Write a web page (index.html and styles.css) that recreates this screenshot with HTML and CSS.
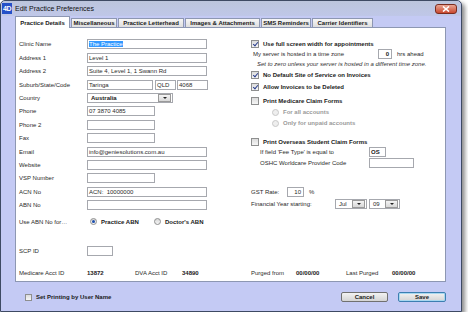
FILE: index.html
```html
<!DOCTYPE html>
<html lang="en">

<head>
    <meta charset="UTF-8">
    <title>Edit Practice Preferences</title>
    <link rel="stylesheet" href="styles.css">
</head>

<body>
    <div class="window">
        <!-- 标题栏 -->
        <div class="titlebar">
            <span class="app-icon">4D</span>
            <span class="title">Edit Practice Preferences</span>
            <span class="close-btn">
                <svg width="8" height="6" viewBox="0 0 8 6"><path d="M1 0.5 L7 5.5 M7 0.5 L1 5.5" stroke="#fff" stroke-width="1.6"/></svg>
            </span>
        </div>

        <div class="dialog">
            <!-- 选项卡 -->
            <div class="tabs">
                <div class="tab active" style="width:55px">Practice Details</div>
                <div class="tab" style="width:46px">Miscellaneous</div>
                <div class="tab" style="width:66px">Practice Letterhead</div>
                <div class="tab" style="width:75px">Images &amp; Attachments</div>
                <div class="tab" style="width:50px">SMS Reminders</div>
                <div class="tab" style="width:61px">Carrier Identifiers</div>
            </div>

            <div class="panel">
                <!-- 左侧：诊所信息 -->
                <div class="col-left">
                    <div class="field"><span class="label">Clinic Name</span><span class="input w-long"><span class="selected-text">The Practice</span></span></div>
                    <div class="field"><span class="label">Address 1</span><span class="input w-long">Level 1</span></div>
                    <div class="field"><span class="label">Address 2</span><span class="input w-long">Suite 4, Level 1, 1 Swann Rd</span></div>
                    <div class="field"><span class="label">Suburb/State/Code</span><span class="input w-suburb">Taringa</span><span class="input w-state">QLD</span><span class="input w-code">4068</span></div>
                    <div class="field"><span class="label">Country</span><span class="select w-country"><b>Australia</b><span class="drop"></span></span></div>
                    <div class="field"><span class="label">Phone</span><span class="input w-mid">07 3870 4085</span></div>
                    <div class="field"><span class="label">Phone 2</span><span class="input w-mid"></span></div>
                    <div class="field"><span class="label">Fax</span><span class="input w-mid"></span></div>
                    <div class="field"><span class="label">Email</span><span class="input w-long">info@geniesolutions.com.au</span></div>
                    <div class="field"><span class="label">Website</span><span class="input w-long"></span></div>
                    <div class="field"><span class="label">VSP Number</span><span class="input w-mid"></span></div>
                    <div class="field"><span class="label">ACN No</span><span class="input w-long">ACN:&nbsp; 10000000</span></div>
                    <div class="field"><span class="label">ABN No</span><span class="input w-long"></span></div>
                    <div class="field abn-row">
                        <span class="label">Use ABN No for…</span>
                        <span class="radio checked"></span><b class="radio-text">Practice ABN</b>
                        <span class="radio doctor"></span><b class="radio-text">Doctor's ABN</b>
                    </div>
                    <div class="field scp-row"><span class="label">SCP ID</span><span class="input w-scp"></span></div>
                    <div class="field acct-row">
                        <span class="label">Medicare Acct ID</span><b class="value w-48">13872</b>
                        <span class="label w-47">DVA Acct ID</span><b class="value">34890</b>
                    </div>
                </div>

                <!-- 右侧：选项 -->
                <div class="col-right">
                    <div class="row r1"><span class="check checked"></span><b>Use full screen width for appointments</b></div>
                    <div class="row r2 indent-2"><span class="server-label">My server is hosted in a time zone</span><span class="input w-hrs num"><b>0</b></span><span class="after">hrs ahead</span></div>
                    <div class="row r3 indent-6 hint">Set to zero unless your server is hosted in a different time zone.</div>
                    <div class="row r4"><span class="check checked"></span><b>No Default Site of Service on Invoices</b></div>
                    <div class="row r5"><span class="check checked"></span><b>Allow Invoices to be Deleted</b></div>
                    <div class="row r6"><span class="check"></span><b>Print Medicare Claim Forms</b></div>
                    <div class="row r7 indent-21 disabled"><span class="radio off"></span><b>For all accounts</b></div>
                    <div class="row r8 indent-21 disabled"><span class="radio off"></span><b>Only for unpaid accounts</b></div>
                    <div class="row r9"><span class="check"></span><b>Print Overseas Student Claim Forms</b></div>
                    <div class="row r10 indent-9"><span class="fee-label">If field 'Fee Type' is equal to</span><span class="input w-os"><b>OS</b></span></div>
                    <div class="row r11 indent-9"><span class="fee-label">OSHC Worldcare Provider Code</span><span class="input w-oshc"></span></div>
                    <div class="row r12"><span class="gst-label">GST Rate:</span><span class="input w-gst num">10</span><span class="after">%</span></div>
                    <div class="row r13"><span class="year-label">Financial Year starting:</span><span class="select w-jul">Jul<span class="drop"></span></span><span class="select w-yr">09<span class="drop"></span></span></div>
                    <div class="row purged">
                        <span class="purged-label">Purged from</span><b class="purged-value">00/00/00</b>
                        <span class="purged-label2">Last Purged</span><b>00/00/00</b>
                    </div>
                </div>
            </div>

            <!-- 底部按钮 -->
            <div class="footer">
                <span class="check"></span><b>Set Printing by User Name</b>
                <button class="btn cancel">Cancel</button>
                <button class="btn save">Save</button>
            </div>
        </div>
    </div>
</body>

</html>
```

FILE: styles.css
```css
/* 页面基础 */
body {
    margin: 0;
    background-color: #fff;
    font-family: "Liberation Sans", Arial, sans-serif;
    font-size: 6px;
    color: #2a2a2a;
}

b {
    font-weight: bold;
    color: #1a1a1a;
}

/* 窗口外框 */
.window {
    width: 460px;
    height: 310px;
    border: 1px solid #3e4a63;
    border-radius: 5px 5px 0 0;
    background-color: #c4caf4;
    box-shadow: 3px 3px 4px rgba(0, 0, 0, 0.45);
    display: flex;
    flex-direction: column;
}

/* 标题栏 */
.titlebar {
    height: 15px;
    display: flex;
    align-items: center;
    padding-left: 1px;
    border-radius: 5px 5px 0 0;
    background: linear-gradient(#bcc5dc, #bfc7e8);
}

.app-icon {
    width: 10px;
    height: 11px;
    background-color: #2450c8;
    color: #fff;
    font-size: 7px;
    font-weight: bold;
    display: flex;
    align-items: center;
    justify-content: center;
    margin-right: 3px;
    letter-spacing: -0.5px;
}

.title {
    font-size: 7px;
    color: #111;
}

.close-btn {
    margin-left: auto;
    margin-right: 4px;
    width: 20px;
    height: 8px;
    border: 1px solid #7b2c1f;
    border-radius: 3px;
    background: linear-gradient(#e9a594, #c9482f);
    display: flex;
    align-items: center;
    justify-content: center;
}

/* 对话框主体 */
.dialog {
    flex: 1;
    display: flex;
    flex-direction: column;
    padding: 0 15px 0 14px;
}

/* 选项卡 */
.tabs {
    height: 11px;
    display: flex;
    align-items: flex-end;
    position: relative;
    z-index: 1;
}

.tab {
    height: 9px;
    box-sizing: border-box;
    border: 1px solid #8d97b2;
    border-bottom: none;
    background: linear-gradient(#f6f6f6, #dedede);
    font-weight: bold;
    color: #1a1a1a;
    display: flex;
    align-items: center;
    justify-content: center;
    white-space: nowrap;
    margin-right: 1px;
}

.tab.active {
    height: 12px;
    margin-bottom: -1px;
    background: #fff;
}

/* 白色面板 */
.panel {
    height: 255px;
    box-sizing: border-box;
    border: 1px solid #8d97b2;
    background-color: #fff;
    display: flex;
}

.col-left {
    width: 229px;
    padding: 9.8px 0 0 3px;
    box-sizing: border-box;
}

.field {
    height: 13.4px;
    display: flex;
    align-items: center;
}

.label {
    width: 68px;
    flex-shrink: 0;
}

.abn-row {
    margin-top: 3px;
}

.scp-row {
    margin-top: 15.7px;
}

.acct-row {
    margin-top: 8.6px;
}

.value.w-48 {
    width: 48px;
}

.label.w-47 {
    width: 47px;
}

/* 输入框 */
.input {
    height: 10px;
    box-sizing: border-box;
    border: 1px solid #a6a8ae;
    background-color: #fff;
    display: flex;
    align-items: center;
    padding-left: 1px;
    white-space: nowrap;
    overflow: hidden;
    flex-shrink: 0;
}

.selected-text {
    background-color: #3399ff;
    color: #fff;
}

.w-long { width: 120px; }
.w-mid { width: 68px; }
.w-suburb { width: 66px; }
.w-state { width: 21px; margin-left: 2px; }
.w-code { width: 31px; margin-left: 1px; }
.w-scp { width: 26px; }
.w-hrs { width: 14px; }
.w-os { width: 17px; }
.w-oshc { width: 45px; }
.w-gst { width: 17px; }

.num {
    justify-content: flex-end;
    padding-right: 2px;
}

/* 下拉框 */
.select {
    height: 10px;
    box-sizing: border-box;
    border: 1px solid #a6a8ae;
    background-color: #fff;
    display: flex;
    align-items: center;
    padding-left: 3px;
    flex-shrink: 0;
}

.select .drop {
    margin-left: auto;
    margin-right: 1px;
    width: 11px;
    height: 6px;
    border: 1px solid #9a9a9a;
    background: linear-gradient(#f4f4f4, #d8d8d8);
    position: relative;
}

.select .drop::after {
    content: "";
    position: absolute;
    left: 4px;
    top: 2px;
    border-left: 2px solid transparent;
    border-right: 2px solid transparent;
    border-top: 2px solid #222;
}

.w-country { width: 86px; }
.w-jul { width: 32px; }
.w-yr { width: 31px; margin-left: 2px; }

/* 复选框与单选框 */
.check {
    width: 6px;
    height: 6px;
    border: 1px solid #8e8f8f;
    background: linear-gradient(#dcdcdc, #f6f6f6);
    margin-right: 4px;
    flex-shrink: 0;
    position: relative;
}

.check.checked::after {
    content: "";
    position: absolute;
    left: 2px;
    top: 0;
    width: 2px;
    height: 4px;
    border-right: 1.3px solid #2b3f8e;
    border-bottom: 1.3px solid #2b3f8e;
    transform: rotate(40deg);
}

.radio {
    width: 5px;
    height: 5px;
    border: 1px solid #8e8f8f;
    border-radius: 50%;
    background: linear-gradient(#d8d8d8, #f6f6f6);
    flex-shrink: 0;
    margin-right: 4px;
    position: relative;
}

.radio.checked::after {
    content: "";
    position: absolute;
    left: 1px;
    top: 1px;
    width: 3px;
    height: 3px;
    border-radius: 50%;
    background-color: #1d4fae;
}

.radio.checked {
    margin-left: 3px;
}

.radio-text {
    width: 53px;
}

.radio.off {
    border-color: #c8c8c8;
    background: #eee;
}

/* 右侧选项 */
.col-right {
    flex: 1;
    display: flex;
    flex-direction: column;
    padding: 11px 0 3px 6px;
}

.row {
    height: 10px;
    display: flex;
    align-items: center;
    white-space: nowrap;
}

.r4 { margin-top: 1px; }
.r5 { margin-top: 2px; }
.r6 { margin-top: 4px; }
.r7 { margin-top: 1px; }
.r8 { margin-top: 1px; }
.r9 { margin-top: 9px; }
.r11 { margin-top: 1px; }
.r12 { margin-top: 19px; }
.r13 { margin-top: 2px; }

.indent-2 { padding-left: 2px; }
.indent-6 { padding-left: 6px; }
.indent-9 { padding-left: 9px; }
.indent-21 { padding-left: 21px; }

.hint {
    font-style: italic;
    color: #333;
}

.disabled b {
    color: #9a9a9a;
}

.server-label { width: 125px; }
.fee-label { width: 109px; }
.gst-label { width: 36px; }
.year-label { width: 84px; }

.after {
    margin-left: 5px;
}

.purged {
    margin-top: auto;
    padding-left: -1px;
}

.purged-label { width: 45px; }
.purged-value { width: 50px; }
.purged-label2 { width: 46px; }

/* 底部 */
.footer {
    flex: 1;
    display: flex;
    align-items: center;
    padding-left: 10px;
    padding-top: 1px;
}

.footer .check {
    width: 5px;
    height: 5px;
}

.btn {
    height: 10px;
    padding: 0;
    border: 1px solid #707070;
    border-radius: 2px;
    background: linear-gradient(#f2f2f2, #d4d4d4);
    font-family: "Liberation Sans", Arial, sans-serif;
    font-size: 6px;
    font-weight: bold;
    color: #1a1a1a;
    cursor: pointer;
}

.btn.cancel {
    width: 47px;
    margin-left: auto;
}

.btn.save {
    width: 48px;
    margin-left: 10px;
    border-color: #3c7fb1;
    box-shadow: inset 0 0 0 1px #a8d8f0;
}
```
